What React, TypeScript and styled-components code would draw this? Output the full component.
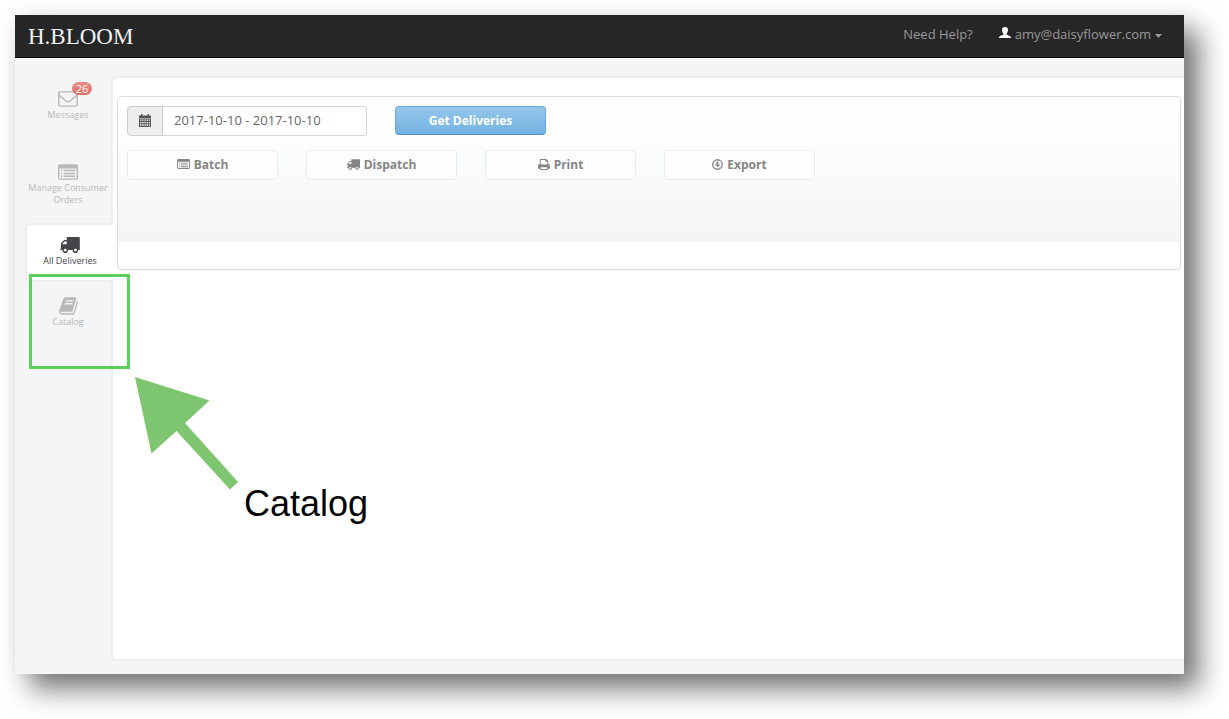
import React from "react";
import styled, { createGlobalStyle, css } from "styled-components";

const GlobalStyle = createGlobalStyle`
  *, *::before, *::after { box-sizing: border-box; }
  body {
    margin: 0;
    background: #fff;
    font-family: "Open Sans", "Noto Sans", sans-serif;
    font-size: 12px;
    color: #555;
  }
`;

const Page = styled.div`
  position: relative;
  min-height: 100vh;
  padding: 15px 45px 45px 15px;
  display: flex;
`;

const Frame = styled.div`
  flex: 1;
  min-width: 0;
  display: flex;
  flex-direction: column;
  background: #f5f5f5;
  box-shadow: 15px 15px 26px rgba(0, 0, 0, 0.54), 0 0 20px rgba(0, 0, 0, 0.04);
`;

const Header = styled.header`
  display: flex;
  align-items: flex-start;
  justify-content: space-between;
  height: 43px;
  padding: 0 22px 0 13px;
  background: #262626;
  border-bottom: 1px solid #000;
`;

const Logo = styled.a`
  font-family: "Liberation Serif", serif;
  font-size: 23px;
  line-height: 44px;
  color: #f2f2f2;
  text-decoration: none;
`;

const UserMenu = styled.div`
  display: flex;
  gap: 26px;
  font-size: 13px;
  line-height: 18px;
  padding-top: 10px;
`;

const HeaderLink = styled.a`
  color: #999;
  text-decoration: none;
`;

const AccountButton = styled.button`
  display: flex;
  align-items: center;
  gap: 4px;
  padding: 0;
  border: 0;
  background: none;
  color: #999;
  font: inherit;
`;

const Body = styled.div`
  flex: 1;
  display: flex;
  padding: 18px 0 13px 10px;
`;

const Sidebar = styled.nav`
  display: flex;
  flex-direction: column;
  gap: 2px;
  flex: 0 0 86px;
  padding-top: 1px;
`;

const NavItem = styled.a<{ $active?: boolean; $tall?: boolean }>`
  display: flex;
  flex-direction: column;
  align-items: center;
  gap: 1px;
  min-height: ${(p) => (p.$tall ? 71 : 59)}px;
  padding: 11px 0;
  border: 2px solid transparent;
  border-width: 2px 0;
  font-size: 9px;
  line-height: 12px;
  text-align: center;
  text-decoration: none;
  color: #b8b8b8;
  ${(p) =>
    p.$active &&
    css`
      position: relative;
      margin-right: -2px;
      border: 2px solid #eee;
      border-right: 0;
      border-radius: 4px 0 0 4px;
      background: #fff;
      color: #45454c;
    `}
`;

const NavIcon = styled.span`
  position: relative;
  display: flex;
  align-items: center;
  justify-content: center;
  width: 20px;
  height: 18px;
`;

const Badge = styled.span`
  position: absolute;
  left: 14px;
  top: -8px;
  width: 20px;
  border-radius: 7px;
  background: linear-gradient(#e98d86, #df6d66);
  color: #fff;
  font-size: 11px;
  line-height: 13px;
`;

const Content = styled.main`
  flex: 1;
  min-width: 0;
  padding: 18px 3px 18px 4px;
  border: 2px solid #eee;
  border-right: 0;
  border-radius: 5px 0 0 5px;
  background: #fff;
`;

const Panel = styled.section`
  padding-bottom: 27px;
  border: 1px solid #ddd;
  border-radius: 4px;
  box-shadow: 0 1px 1px rgba(0, 0, 0, 0.05);
`;

const Toolbar = styled.form`
  display: flex;
  flex-direction: column;
  gap: 14px;
  min-height: 145px;
  padding: 9px;
  border-radius: 4px 4px 0 0;
  background: linear-gradient(#fff, #fbfcfc 40%, #f4f4f4);
`;

const ToolbarRow = styled.div`
  display: flex;
  flex-wrap: wrap;
  gap: 14px 28px;
`;

const DateGroup = styled.label`
  display: flex;
  width: 240px;
  height: 30px;
`;

const DateAddon = styled.span`
  display: flex;
  align-items: center;
  justify-content: center;
  width: 36px;
  padding-bottom: 2px;
  border: 1px solid #ccc;
  border-radius: 4px 0 0 4px;
  background: #eee;
  color: #555;
`;

const DateInput = styled.input`
  flex: 1;
  min-width: 0;
  padding: 0 11px 2px;
  border: 1px solid #d4d4d4;
  border-left: 0;
  border-radius: 0 4px 4px 0;
  background: #fff;
  color: #666;
  font: inherit;
  font-size: 13px;
`;

const Button = styled.button<{ $primary?: boolean }>`
  display: flex;
  align-items: center;
  justify-content: center;
  gap: 4px;
  width: 151px;
  height: 30px;
  padding: 0 0 2px;
  border: 1px solid #ebebeb;
  border-radius: 4px;
  background: #fdfdfd;
  color: #858585;
  font: inherit;
  font-weight: 700;
  ${(p) =>
    p.$primary &&
    css`
      height: 29px;
      padding: 0;
      border-color: #6aa9d8 #6aa9d8 #4f8fc0;
      background: linear-gradient(#93c6ea, #73b3e2);
      color: #fff;
    `}
`;

const Highlight = styled.div`
  position: absolute;
  left: 29px;
  top: 274px;
  width: 101px;
  height: 95px;
  border: 3px solid #5acf5a;
  pointer-events: none;
`;

const Arrow = styled.svg`
  position: absolute;
  left: 130px;
  top: 370px;
  pointer-events: none;
`;

const Callout = styled.p`
  position: absolute;
  left: 244px;
  top: 484px;
  margin: 0;
  font-family: "Liberation Sans", sans-serif;
  font-size: 36px;
  line-height: 40px;
  color: #000;
`;

type IconProps = { w: number; h: number };

const EnvelopeIcon = ({ w, h }: IconProps) => (
  <svg width={w} height={h} viewBox="0 256 1792 1408" fill="currentColor" aria-hidden="true">
    <path d="M1664 1504v-768q-32 36-69 66-268 206-426 338-51 43-83 67t-86.5 48.5-102.5 24.5h-2q-48 0-102.5-24.5t-86.5-48.5-83-67q-158-132-426-338-37-30-69-66v768q0 13 9.5 22.5t22.5 9.5h1472q13 0 22.5-9.5t9.5-22.5zm0-1051v-24.5l-.5-13-3-12.5-5.5-9-9-7.5-14-2.5h-1472q-13 0-22.5 9.5t-9.5 22.5q0 168 147 284 193 152 401 317 6 5 35 29.5t46 37.5 44.5 31.5 50.5 27.5 43 9h2q20 0 43-9t50.5-27.5 44.5-31.5 46-37.5 35-29.5q208-165 401-317 54-43 100.5-115.5t46.5-131.5zm128-37v1088q0 66-47 113t-113 47h-1472q-66 0-113-47t-47-113v-1088q0-66 47-113t113-47h1472q66 0 113 47t47 113z" />
  </svg>
);

const ListIcon = ({ w, h }: IconProps) => (
  <svg width={w} height={h} viewBox="0 0 28 22" fill="currentColor" aria-hidden="true">
    <path
      fillRule="evenodd"
      d="M2.5 0h23A2.500 2.500 0 0 1 28 2.500v17A2.500 2.500 0 0 1 25.500 22h-23A2.500 2.500 0 0 1 0 19.500v-17A2.500 2.500 0 0 1 2.500 0zM2 6.500v13q0 .5.5.5h23q.5 0 .5-.5v-13q0-.5-.5-.5h-23q-.5 0-.5.5z"
    />
    <path d="M4 8h2v2H4zM8 8h16v2H8zM4 12h2v2H4zM8 12h16v2H8zM4 16h2v2H4zM8 16h16v2H8z" />
  </svg>
);

const TruckIcon = ({ w, h }: IconProps) => (
  <svg width={w} height={h} viewBox="64 256 1728 1408" fill="currentColor" aria-hidden="true">
    <path d="M640 1408q0-52-38-90t-90-38-90 38-38 90 38 90 90 38 90-38 38-90zm-384-512h384v-256h-158q-13 0-22 9l-195 195q-9 9-9 22v30zm1280 512q0-52-38-90t-90-38-90 38-38 90 38 90 90 38 90-38 38-90zm256-1088v1024q0 15-4 26.5t-13.5 18.5-16.5 11.5-23.5 6-22.5 2-25.5 0-22.5-.5q0 106-75 181t-181 75-181-75-75-181h-384q0 106-75 181t-181 75-181-75-75-181h-64q-3 0-22.5.5t-25.5 0-22.5-2-23.5-6-16.5-11.5-13.5-18.5-4-26.5q0-26 19-45t45-19v-320q0-8-.5-35t0-38 2.5-34.5 6.5-37 14-30.5 22.5-30l198-198q19-19 50.5-32t58.5-13h160v-192q0-26 19-45t45-19h1024q26 0 45 19t19 45z" />
  </svg>
);

const BookIcon = ({ w, h }: IconProps) => (
  <svg width={w} height={h} viewBox="64 128 1664 1536" fill="currentColor" aria-hidden="true">
    <path d="M1703 478q40 57 18 129l-275 906q-19 64-76.5 107.5t-122.5 43.5h-923q-77 0-148.5-53.5t-99.5-131.5q-24-67-2-127 0-4 3-27t4-37q1-8-3-21.5t-3-19.5q2-11 8-21t16.5-23.5 16.5-23.5q23-38 45-91.5t30-91.5q3-10 .5-30t-.5-28q3-11 17-28t17-23q21-36 42-92t25-90q1-9-2.5-32t.5-28q4-13 22-30.500t22-22.500q19-26 42.500-84.500t27.500-96.500q1-8-3-25.500t-2-26.500q2-8 9-18t18-23 17-21q8-12 16.500-30.500t15-35 16-36 19.500-32 26.500-23.500 36-11.500 47.500 5.500l-1 3q38-9 51-9h761q74 0 114 56t18 130l-274 906q-36 119-71.500 153.500t-128.500 34.500h-869q-27 0-38 15-11 16-1 43 24 70 144 70h923q29 0 56-15.500t35-41.500l300-987q7-22 5-57 38 15 59 43zm-1064 2q-4 13 2 22.500t20 9.500h608q13 0 25.500-9.500t16.500-22.500l21-64q4-13-2-22.500t-20-9.500h-608q-13 0-25.500 9.500t-16.500 22.500zm-83 256q-4 13 2 22.500t20 9.500h608q13 0 25.500-9.500t16.500-22.500l21-64q4-13-2-22.500t-20-9.500h-608q-13 0-25.500 9.500t-16.500 22.500z" />
  </svg>
);

const CalendarIcon = ({ w, h }: IconProps) => (
  <svg width={w} height={h} viewBox="0 0 12 13" fill="currentColor" aria-hidden="true">
    <path
      fillRule="evenodd"
      d="M0 1.500h2V0h1.500v1.500h5V0H10v1.500h2V4H0zM0 4.600h12V13H0zM1 5.600v1.200h1.500V5.600zM3.200 5.600v1.200h1.500V5.600zM5.400 5.600v1.200h1.400V5.600zM7.500 5.600v1.200H9V5.600zM9.700 5.600v1.200H11V5.600zM1 7.900v1.300h1.500V7.900zM3.200 7.900v1.300h1.500V7.900zM5.400 7.900v1.300h1.400V7.900zM7.500 7.900v1.300H9V7.900zM9.700 7.900v1.300H11V7.900zM1 10.300v1.400h1.500v-1.400zM3.200 10.300v1.400h1.500v-1.400zM5.400 10.300v1.400h1.400v-1.400zM7.500 10.300v1.400H9v-1.400zM9.700 10.300v1.400H11v-1.400z"
    />
  </svg>
);

const PrintIcon = ({ w, h }: IconProps) => (
  <svg width={w} height={h} viewBox="0 0 26 24" fill="currentColor" aria-hidden="true">
    <path
      fillRule="evenodd"
      d="M4 11V1.500Q4 0 5.500 0H17q1.200 0 2.200 1l1.800 1.800q1 1 1 2.200v6h1q3 0 3 3v6.500q0 .5-.5.5H22v1.500q0 1.500-1.500 1.500h-15Q4 24 4 22.500V21H.5q-.5 0-.5-.5V14q0-3 3-3zM6 2v10h14V6h-2.500Q16 6 16 4.500V2zM6 18v4h14v-4zM23 13a1 1 0 1 0 0 2 1 1 0 0 0 0-2z"
    />
  </svg>
);

const DownloadIcon = ({ w, h }: IconProps) => (
  <svg width={w} height={h} viewBox="0 0 12 12" aria-hidden="true">
    <circle cx="6" cy="6" r="5.200" fill="none" stroke="currentColor" strokeWidth="1.500" />
    <path d="M5 2.800h2v3.100h1.900L6 9 3.100 5.900H5z" fill="currentColor" />
  </svg>
);

const UserIcon = ({ w, h }: IconProps) => (
  <svg width={w} height={h} viewBox="0 0 12 15" fill="#fff" aria-hidden="true">
    <path d="M6 0c2 0 3 1.300 3 3.100 0 1.500-.6 2.900-1.500 3.600v.7c.6.700 3.900 1.100 4.300 2.500.1.400.2.700.2 1.100H0c0-.4 0-.7.2-1.100.4-1.400 3.700-1.800 4.300-2.500v-.7C3.600 6 3 4.600 3 3.100 3 1.300 4 0 6 0z" />
  </svg>
);

const CaretIcon = ({ w, h }: IconProps) => (
  <svg width={w} height={h} viewBox="0 0 7 8" fill="currentColor" aria-hidden="true">
    <path d="M0 4h7L3.500 8z" />
  </svg>
);

export default function App() {
  return (
    <Page>
      <GlobalStyle />
      <Frame>
        <Header>
          <Logo href="#">H.BLOOM</Logo>
          <UserMenu>
            <HeaderLink href="#help">Need Help?</HeaderLink>
            <AccountButton type="button">
              <UserIcon w={12} h={15} />
              amy@daisyflower.com
              <CaretIcon w={7} h={8} />
            </AccountButton>
          </UserMenu>
        </Header>
        <Body>
          <Sidebar>
            <NavItem href="#messages" $tall>
              <NavIcon>
                <EnvelopeIcon w={20} h={16} />
                <Badge>26</Badge>
              </NavIcon>
              Messages
            </NavItem>
            <NavItem href="#orders" $tall>
              <NavIcon>
                <ListIcon w={20} h={16} />
              </NavIcon>
              Manage Consumer Orders
            </NavItem>
            <NavItem href="#deliveries" $active aria-current="page">
              <NavIcon>
                <TruckIcon w={20} h={16} />
              </NavIcon>
              All Deliveries
            </NavItem>
            <NavItem href="#catalog">
              <NavIcon>
                <BookIcon w={19} h={18} />
              </NavIcon>
              Catalog
            </NavItem>
          </Sidebar>
          <Content>
            <Panel>
              <Toolbar onSubmit={(e) => e.preventDefault()}>
                <ToolbarRow>
                  <DateGroup>
                    <DateAddon>
                      <CalendarIcon w={12} h={13} />
                    </DateAddon>
                    <DateInput
                      type="text"
                      aria-label="Delivery dates"
                      defaultValue="2017-10-10 - 2017-10-10"
                    />
                  </DateGroup>
                  <Button type="submit" $primary>
                    Get Deliveries
                  </Button>
                </ToolbarRow>
                <ToolbarRow>
                  <Button type="button">
                    <ListIcon w={13} h={10} />
                    Batch
                  </Button>
                  <Button type="button">
                    <TruckIcon w={13} h={11} />
                    Dispatch
                  </Button>
                  <Button type="button">
                    <PrintIcon w={12} h={11} />
                    Print
                  </Button>
                  <Button type="button">
                    <DownloadIcon w={11} h={11} />
                    Export
                  </Button>
                </ToolbarRow>
              </Toolbar>
            </Panel>
          </Content>
        </Body>
      </Frame>
      <Highlight />
      <Arrow width="112" height="124" viewBox="0 0 112 124" aria-hidden="true">
        <polygon points="5,7 79.500,30.500 55,53 108,112 100,119.500 46.500,61 21.500,83.500" fill="#7dc66f" />
      </Arrow>
      <Callout>Catalog</Callout>
    </Page>
  );
}
